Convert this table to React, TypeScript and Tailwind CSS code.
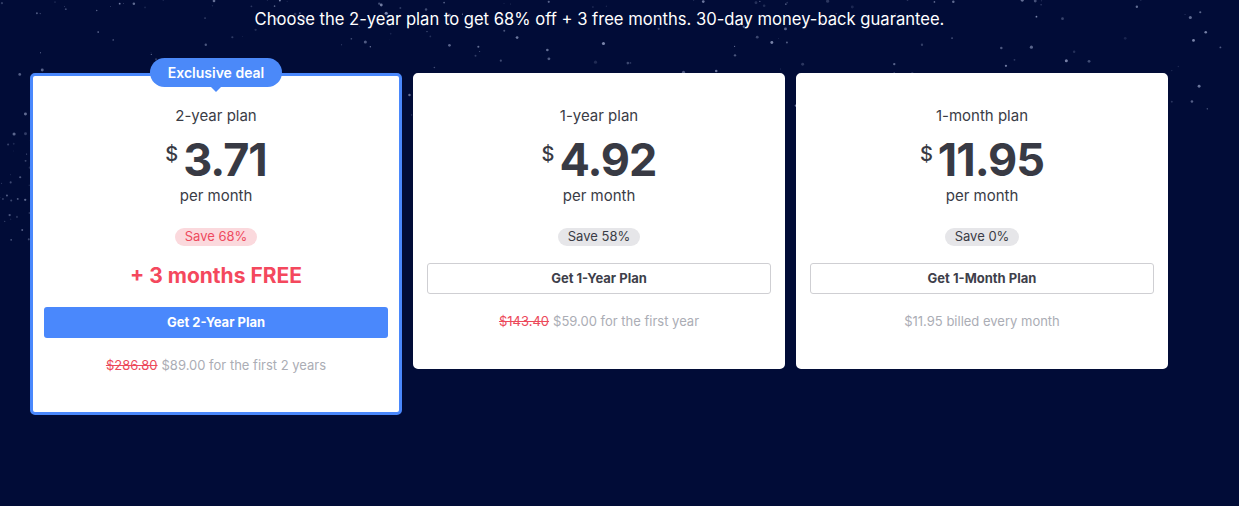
import React from "react";

// deterministic star field
function makeStars() {
  let seed = 7;
  const rnd = () => {
    seed = (seed * 16807) % 2147483647;
    return (seed - 1) / 2147483646;
  };
  const stars: { x: number; y: number; r: number; o: number }[] = [];
  for (let i = 0; i < 260; i++) {
    const y = Math.pow(rnd(), 1.5) * 150;
    stars.push({ x: rnd() * 1239, y, r: 0.4 + rnd() * 1.2, o: 0.12 + rnd() * 0.5 });
  }
  for (let i = 0; i < 25; i++) {
    stars.push({ x: rnd() * 30, y: 140 + rnd() * 110, r: 0.4 + rnd() * 0.8, o: 0.12 + rnd() * 0.35 });
  }
  return stars;
}

const stars = makeStars();

const font = { fontFamily: "Inter, 'Open Sans', sans-serif" };

type Plan = {
  name: string;
  price: string;
  save: string;
  cta: string;
  old?: string;
  note: string;
  featured?: boolean;
};

const plans: Plan[] = [
  { name: "2-year plan", price: "3.71", save: "Save 68%", cta: "Get 2-Year Plan", old: "$286.80", note: "$89.00 for the first 2 years", featured: true },
  { name: "1-year plan", price: "4.92", save: "Save 58%", cta: "Get 1-Year Plan", old: "$143.40", note: "$59.00 for the first year" },
  { name: "1-month plan", price: "11.95", save: "Save 0%", cta: "Get 1-Month Plan", note: "$11.95 billed every month" },
];

function PlanCard({ plan }: { plan: Plan }) {
  return (
    <div
      className={
        "relative w-[372px] rounded-[5px] border-[3px] bg-white px-[11px] pt-[30px] flex flex-col items-center " +
        (plan.featured ? "border-[#4a88fc] pb-[38px]" : "border-white pb-[36px]")
      }
    >
      {plan.featured && (
        <div className="absolute -top-[18px] left-1/2 -translate-x-1/2">
          <div className="h-[29px] w-[132px] rounded-[15px] bg-[#4b89f9] flex items-center justify-center text-[14px] font-semibold text-white">
            Exclusive deal
          </div>
          <div className="mx-auto -mt-px h-0 w-0 border-x-[6px] border-t-[6px] border-x-transparent border-t-[#4b89f9]" />
        </div>
      )}
      <div className="text-[15px] leading-[20px] text-[#3a3c46]">{plan.name}</div>
      <div className="mt-[10px] flex items-start h-[48px] text-[#383a44]">
        <span className="mt-[8px] mr-[5px] text-[20px] leading-[20px] font-medium">$</span>
        <span className="text-[45px] leading-[48px] font-bold tracking-[-1px]">{plan.price}</span>
      </div>
      <div className="mt-[2px] text-[15px] leading-[20px] text-[#3a3c46]">per month</div>
      <div
        className={
          "mt-[22px] h-[18px] rounded-full px-[10px] flex items-center text-[13px] " +
          (plan.featured ? "bg-[#fbd9dd] text-[#ee4a5d]" : "bg-[#e6e6e9] text-[#3a3c46]")
        }
      >
        {plan.save}
      </div>
      {plan.featured && (
        <div className="mt-[16px] text-[21px] leading-[28px] font-bold text-[#f4485d]">+ 3 months FREE</div>
      )}
      <button
        className={
          "mt-[17px] w-full h-[31px] rounded-[3px] text-[13px] font-bold " +
          (plan.featured
            ? "bg-[#4a88fc] text-white"
            : "border border-[#cfcfd3] bg-white text-[#3e404a]")
        }
      >
        {plan.cta}
      </button>
      <div className="mt-[18px] text-[13px] leading-[18px] text-[#abadb5]">
        {plan.old && <span className="text-[#ec4a5b] line-through mr-[4px]">{plan.old}</span>}
        {plan.note}
      </div>
    </div>
  );
}

export default function App() {
  return (
    <div className="relative min-h-[506px] w-full overflow-hidden bg-[#010c37]" style={font}>
      <svg className="absolute inset-0 pointer-events-none" width="1239" height="506">
        {stars.map((s, i) => (
          <circle key={i} cx={s.x} cy={s.y} r={s.r} fill="#c9d3f5" opacity={s.o} />
        ))}
      </svg>
      <div className="relative">
        <p className="pt-[7px] w-[1199px] text-center text-[16.6px] leading-[24px] text-white">
          Choose the 2-year plan to get 68% off + 3 free months. 30-day money-back guarantee.
        </p>
        <div className="mt-[42px] pl-[30px] flex items-start gap-[11px]">
          {plans.map((p) => (
            <PlanCard key={p.name} plan={p} />
          ))}
        </div>
      </div>
    </div>
  );
}
